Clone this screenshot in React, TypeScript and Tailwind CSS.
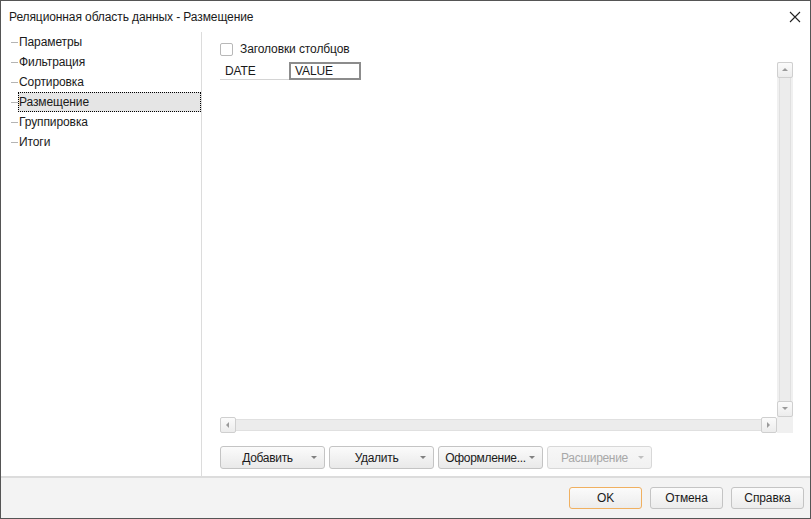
import React from 'react';

const items = ['Параметры', 'Фильтрация', 'Сортировка', 'Размещение', 'Группировка', 'Итоги'];

const Arrow = ({ dir, className = '' }: { dir: 'up' | 'down' | 'left' | 'right'; className?: string }) => {
  const pts = {
    up: '1,5 4,2 7,5',
    down: '1,2 4,5 7,2',
    left: '5,1 2,4 5,7',
    right: '2,1 5,4 2,7',
  }[dir];
  return (
    <svg width="8" height="8" viewBox="0 0 8 8" className={className}>
      <polygon points={pts} fill="currentColor" />
    </svg>
  );
};

const SplitButton = ({ label, disabled }: { label: string; disabled?: boolean }) => (
  <button
    className={`flex h-[23px] w-[105px] items-center rounded-[3px] border bg-gradient-to-b tracking-[-0.3px] ${
      disabled
        ? 'border-[#d8d8d8] from-[#f7f7f7] to-[#f1f1f1] text-[#a8a8a8]'
        : 'border-[#c4c4c4] from-[#fbfbfb] to-[#e9e9e9] text-[#1a1a1a]'
    }`}
  >
    <span className="flex-1 pl-1 text-center">{label}</span>
    <span className={`mr-[6px] ${disabled ? 'text-[#c0c0c0]' : 'text-[#808080]'}`}>
      <Arrow dir="down" />
    </span>
  </button>
);

const ScrollBtn = ({ dir }: { dir: 'up' | 'down' | 'left' | 'right' }) => (
  <div className="flex h-[16px] w-[16px] items-center justify-center rounded-[2px] border border-[#cfcfcf] bg-gradient-to-b from-[#fbfbfb] to-[#ececec] text-[#9a9a9a]">
    <Arrow dir={dir} />
  </div>
);

export default function App() {
  return (
    <div
      className="flex h-[519px] w-[811px] flex-col border border-[#555555] bg-white text-[12px] tracking-[-0.1px] text-[#1a1a1a]"
      style={{ fontFamily: '"Liberation Sans", Arial, sans-serif' }}
    >
      {/* title */}
      <div className="flex h-[31px] shrink-0 items-center justify-between pl-[8px] pr-[6px]">
        <span>Реляционная область данных - Размещение</span>
        <svg width="12" height="12" viewBox="0 0 12 12" className="mr-[3px]">
          <path d="M1 1 L11 11 M11 1 L1 11" stroke="#222" strokeWidth="1.1" />
        </svg>
      </div>

      <div className="flex min-h-0 flex-1">
        {/* tree */}
        <div className="w-[201px] shrink-0 border-r border-[#dcdcdc]">
          {items.map(it => (
            <div key={it} className="flex h-[20px] items-center">
              <span className="ml-[10px] h-px w-[7px] bg-[#b4b4b4]" />
              {it === 'Размещение' ? (
                <span className="flex h-[20px] flex-1 items-center border border-dotted border-black bg-[#e5e5e5]">
                  {it}
                </span>
              ) : (
                <span className="pl-[1px]">{it}</span>
              )}
            </div>
          ))}
        </div>

        {/* content */}
        <div className="flex flex-1 flex-col pl-[18px] pr-[17px] pt-[10px]">
          <label className="flex h-[14px] items-center gap-[7px]">
            <span className="h-[13px] w-[13px] rounded-[2px] border border-[#b8b8b8] bg-white" />
            <span>Заголовки столбцов</span>
          </label>

          <div className="mt-[6px] grid h-[371px] grid-cols-[1fr_16px] grid-rows-[1fr_16px]">
            <div className="overflow-hidden">
              <div className="flex h-[18px]">
                <div className="flex w-[69px] items-center border-b border-[#d4d4d4] pl-[5px]">DATE</div>
                <div className="flex w-[72px] items-center border-2 border-[#8c8c8c] pl-[4px]">VALUE</div>
              </div>
            </div>
            <div className="flex flex-col bg-[#f0f0f0]">
              <ScrollBtn dir="up" />
              <div className="mx-auto w-[12px] flex-1 border-x border-[#e0e0e0] bg-[#ececec]" />
              <ScrollBtn dir="down" />
            </div>
            <div className="flex">
              <ScrollBtn dir="left" />
              <div className="my-auto h-[12px] flex-1 border-y border-[#e0e0e0] bg-[#ececec]" />
              <ScrollBtn dir="right" />
            </div>
            <div className="bg-[#f0f0f0]" />
          </div>

          <div className="mt-[13px] flex gap-[4px]">
            <SplitButton label="Добавить" />
            <SplitButton label="Удалить" />
            <SplitButton label="Оформление..." />
            <SplitButton label="Расширение" disabled />
          </div>
        </div>
      </div>

      {/* footer */}
      <div className="flex h-[42px] shrink-0 items-center justify-end gap-[8px] border-t-2 border-[#dcdcdc] bg-[#f3f3f3] pr-[6px]">
        <button className="h-[22px] w-[73px] rounded-[3px] border border-[#f0b060] bg-gradient-to-b from-[#fbfbfb] to-[#ececec]">OK</button>
        <button className="h-[22px] w-[73px] rounded-[3px] border border-[#c4c4c4] bg-gradient-to-b from-[#fbfbfb] to-[#ececec]">Отмена</button>
        <button className="h-[22px] w-[73px] rounded-[3px] border border-[#c4c4c4] bg-gradient-to-b from-[#fbfbfb] to-[#ececec]">Справка</button>
      </div>
    </div>
  );
}
